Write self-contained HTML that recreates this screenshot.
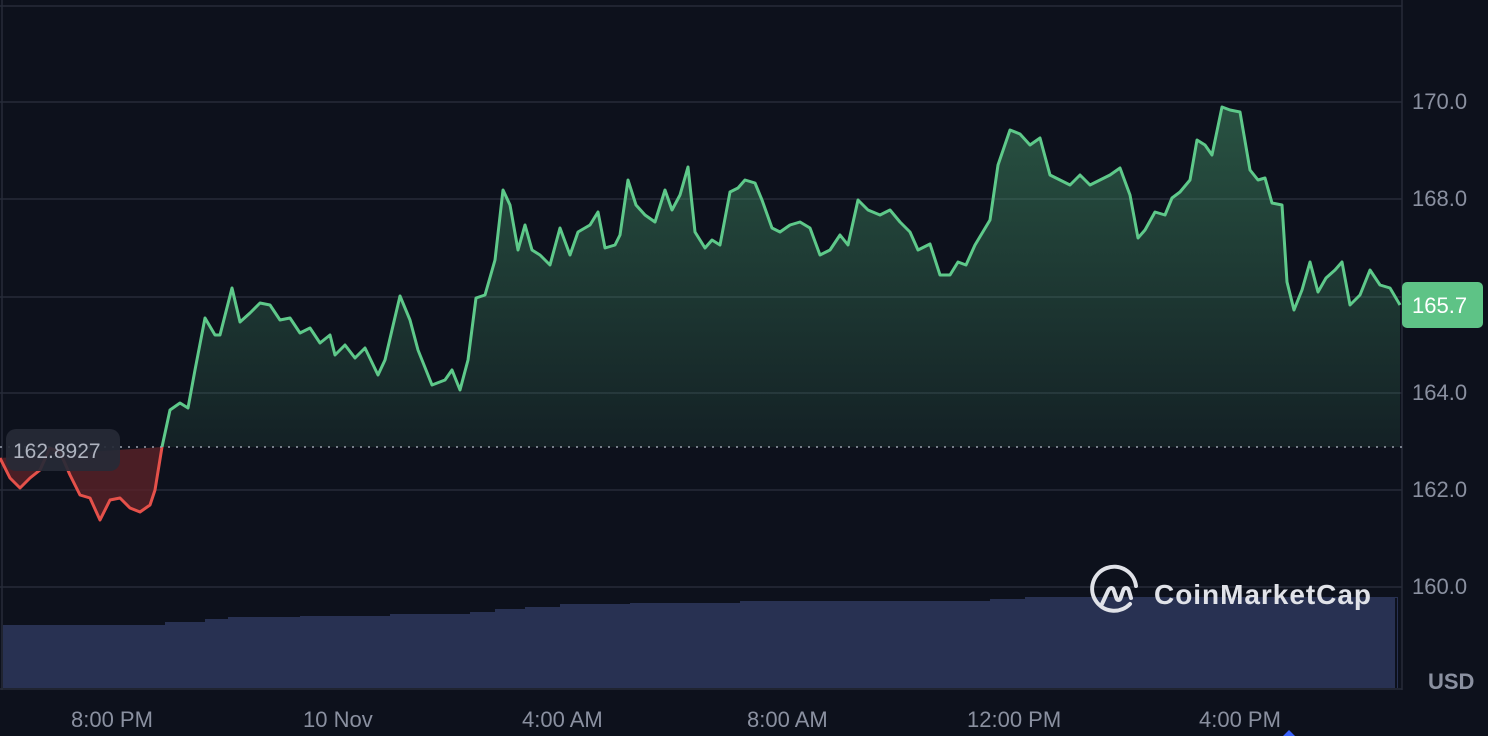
<!DOCTYPE html>
<html><head><style>
body{margin:0;background:#0d111c;width:1488px;height:736px;overflow:hidden;font-family:"Liberation Sans",sans-serif}
svg{position:absolute;left:0;top:0}
</style></head><body>
<svg width="1488" height="736" viewBox="0 0 1488 736">
<defs>
<linearGradient id="g" x1="0" y1="100" x2="0" y2="447" gradientUnits="userSpaceOnUse"><stop offset="0" stop-color="#4fae77" stop-opacity=".42"/><stop offset="1" stop-color="#4fae77" stop-opacity=".1"/></linearGradient>
<clipPath id="up"><rect x="0" y="0" width="1402" height="447"/></clipPath>
<clipPath id="dn"><rect x="0" y="447" width="1402" height="300"/></clipPath>
<path id="p" d="M0,458 L10,478 20,488 30,478 40,470 50,448 60,452 70,475 80,495 90,498 100,520 110,500 120,498 130,508 140,512 150,505 155,490 162,447 170,410 180,403 188,408 195,370 205,318 215,335 220,335 232,288 240,322 250,313 260,303 270,305 280,320 290,318 300,333 310,328 320,343 330,335 335,355 345,345 355,358 365,348 378,375 385,360 392,330 400,296 410,320 418,350 432,385 445,380 452,370 460,390 468,360 476,298 485,295 495,260 503,190 510,205 518,250 525,225 532,250 540,255 550,265 560,228 570,255 578,232 590,225 598,212 605,248 615,245 620,235 628,180 636,205 645,215 655,222 665,190 672,210 680,195 688,167 695,232 705,248 712,240 720,245 730,192 738,188 745,180 755,183 762,200 772,228 780,232 790,225 800,222 810,228 820,255 830,250 840,235 848,245 858,200 868,210 880,215 890,210 900,222 910,232 918,250 930,244 940,275 950,275 958,262 966,265 975,245 990,220 998,165 1010,130 1020,134 1030,145 1040,138 1050,175 1060,180 1070,185 1080,175 1090,185 1100,180 1110,175 1120,168 1130,195 1138,238 1145,230 1155,212 1165,215 1172,198 1180,192 1190,180 1197,140 1205,145 1212,155 1222,107 1230,110 1240,112 1250,170 1258,180 1265,178 1272,203 1282,205 1287,282 1294,310 1302,290 1310,262 1318,292 1326,278 1335,270 1342,262 1350,305 1360,295 1370,270 1380,285 1390,288 1400,305"/>
</defs>
<rect width="1488" height="736" fill="#0d111c"/>
<g stroke="#262b38" stroke-width="1.5">
<line x1="0" y1="6" x2="1402" y2="6"/>
<line x1="0" y1="102" x2="1402" y2="102"/><line x1="0" y1="199" x2="1402" y2="199"/><line x1="0" y1="297" x2="1402" y2="297"/><line x1="0" y1="393" x2="1402" y2="393"/><line x1="0" y1="490" x2="1402" y2="490"/><line x1="0" y1="587" x2="1402" y2="587"/>
<line x1="1402" y1="0" x2="1402" y2="690"/><line x1="0" y1="689" x2="1402" y2="689"/><line x1="2" y1="0" x2="2" y2="690"/>
</g>
<path d="M3 625H165V622H205V619H228V617H300V616H390V614H470V612H495V609H525V607H560V604H630V603H740V601H990V599H1025V597H1398V688H3Z" fill="#283152"/>
<line x1="1396" y1="598" x2="1396" y2="688" stroke="#0d111c" stroke-width="2"/>
<g clip-path="url(#up)"><path d="M0,458 L10,478 20,488 30,478 40,470 50,448 60,452 70,475 80,495 90,498 100,520 110,500 120,498 130,508 140,512 150,505 155,490 162,447 170,410 180,403 188,408 195,370 205,318 215,335 220,335 232,288 240,322 250,313 260,303 270,305 280,320 290,318 300,333 310,328 320,343 330,335 335,355 345,345 355,358 365,348 378,375 385,360 392,330 400,296 410,320 418,350 432,385 445,380 452,370 460,390 468,360 476,298 485,295 495,260 503,190 510,205 518,250 525,225 532,250 540,255 550,265 560,228 570,255 578,232 590,225 598,212 605,248 615,245 620,235 628,180 636,205 645,215 655,222 665,190 672,210 680,195 688,167 695,232 705,248 712,240 720,245 730,192 738,188 745,180 755,183 762,200 772,228 780,232 790,225 800,222 810,228 820,255 830,250 840,235 848,245 858,200 868,210 880,215 890,210 900,222 910,232 918,250 930,244 940,275 950,275 958,262 966,265 975,245 990,220 998,165 1010,130 1020,134 1030,145 1040,138 1050,175 1060,180 1070,185 1080,175 1090,185 1100,180 1110,175 1120,168 1130,195 1138,238 1145,230 1155,212 1165,215 1172,198 1180,192 1190,180 1197,140 1205,145 1212,155 1222,107 1230,110 1240,112 1250,170 1258,180 1265,178 1272,203 1282,205 1287,282 1294,310 1302,290 1310,262 1318,292 1326,278 1335,270 1342,262 1350,305 1360,295 1370,270 1380,285 1390,288 1400,305 L1400,447 L0,447Z" fill="url(#g)"/>
<use href="#p" fill="none" stroke="#5ec98a" stroke-width="3" stroke-linejoin="round"/></g>
<g clip-path="url(#dn)"><path d="M0,458 L10,478 20,488 30,478 40,470 50,448 60,452 70,475 80,495 90,498 100,520 110,500 120,498 130,508 140,512 150,505 155,490 162,447Z" fill="#5a2228" fill-opacity=".8"/>
<use href="#p" fill="none" stroke="#e5514a" stroke-width="3" stroke-linejoin="round"/></g>
<line x1="0" y1="447" x2="1402" y2="447" stroke="#9aa0ad" stroke-width="1.5" stroke-dasharray="2,6"/>
<rect x="6" y="429" width="114" height="42" rx="10" fill="#262a36" fill-opacity=".92"/>
<text x="13" y="458" font-size="21" fill="#aeb3bf">162.8927</text>
<rect x="1402" y="282" width="81" height="46" rx="5" fill="#5ec386"/>
<text x="1412" y="313" font-size="22" fill="#fff">165.7</text>
<g font-size="22" fill="#8a90a0">
<text x="1412" y="109">170.0</text><text x="1412" y="206">168.0</text><text x="1412" y="400">164.0</text><text x="1412" y="497">162.0</text><text x="1412" y="594">160.0</text>
<text x="1428" y="689" font-weight="bold">USD</text>
<text x="71" y="727">8:00 PM</text><text x="303" y="727">10 Nov</text><text x="522" y="727">4:00 AM</text><text x="747" y="727">8:00 AM</text><text x="967" y="727">12:00 PM</text><text x="1199" y="727">4:00 PM</text>
</g>
<path d="M1283 736l6-6 6 6z" fill="#3861fb"/>
<g fill="none" stroke="#e0e2e8" stroke-width="4" stroke-linecap="round" stroke-linejoin="round">
<path d="M1136 586a22 22 0 1 0 -6 18"/>
<path d="M1102 604l6-13c2-4 5-4 6 0l2 6c1 4 4 4 5 0l2-6c1-4 5-4 6 0l2 7"/>
</g>
<text x="1154" y="604" font-size="28" font-weight="bold" fill="#e0e2e8" textLength="217">CoinMarketCap</text>
</svg>
</body></html>
